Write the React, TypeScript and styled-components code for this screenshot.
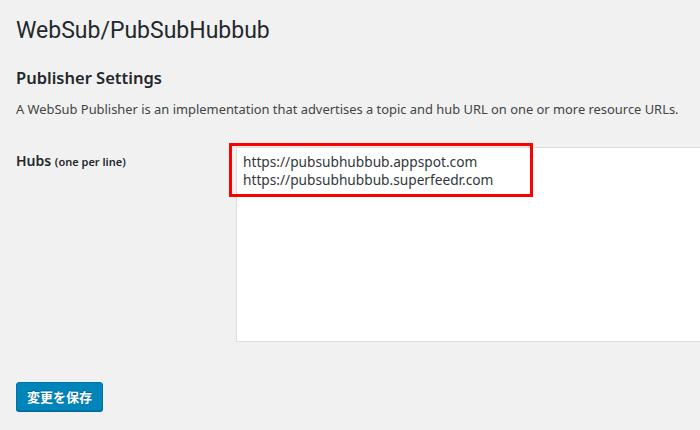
import React from 'react';
import styled, { createGlobalStyle } from 'styled-components';

const GlobalStyle = createGlobalStyle`
  html, body {
    margin: 0;
    padding: 0;
    background: #f1f1f1;
    overflow: hidden;
  }
  body {
    font-family: "Noto Sans", "Noto Sans CJK JP", sans-serif;
    color: #23282d;
  }
`;

const Wrap = styled.div`
  position: relative;
  width: 700px;
  height: 430px;
  padding: 0 0 0 16px;
  box-sizing: border-box;
  overflow: hidden;
`;

const Title = styled.h1`
  margin: 0;
  padding: 16px 0 0;
  font-family: Roboto, sans-serif;
  font-size: 23px;
  font-weight: 400;
  line-height: 29px;
  color: #23282d;
`;

const Section = styled.h2`
  margin: 21px 0 0;
  font-size: 16.5px;
  font-weight: 600;
  line-height: 24px;
`;

const Desc = styled.p`
  margin: 9px 0 0;
  font-size: 12.9px;
  line-height: 20px;
  color: #444;
  white-space: nowrap;
`;

const Row = styled.div`
  display: flex;
  margin-top: 28px;
`;

const Label = styled.div`
  width: 220px;
  flex: none;
  padding-top: 4px;
  font-size: 14px;
  font-weight: 600;
  line-height: 20px;
`;

const Small = styled.small`
  font-size: 11px;
  font-weight: 600;
`;

const Field = styled.div`
  position: relative;
`;

const Area = styled.textarea`
  display: block;
  width: 480px;
  height: 195px;
  box-sizing: border-box;
  margin: 0;
  padding: 5px 6px;
  border: 1px solid #ddd;
  background: #fff;
  font-family: "Noto Sans", sans-serif;
  font-size: 13.7px;
  line-height: 18px;
  color: #32373c;
  resize: none;
  outline: none;
`;

const Highlight = styled.div`
  position: absolute;
  left: -7px;
  top: -4px;
  width: 304px;
  height: 54px;
  box-sizing: border-box;
  border: 3px solid #ff0000;
  pointer-events: none;
`;

const SaveButton = styled.button`
  display: block;
  margin-top: 40px;
  height: 29px;
  padding: 0 10px;
  border: 1px solid #0073aa;
  border-radius: 3px;
  background: #0085ba;
  box-shadow: 0 1px 0 #006799;
  color: #fff;
  font-family: "Noto Sans CJK JP", sans-serif;
  font-size: 13px;
  font-weight: 600;
  text-shadow: 0 -1px 1px #006799;
`;

export default function App() {
  return (
    <>
      <GlobalStyle />
      <Wrap>
        <Title>WebSub/PubSubHubbub</Title>
        <Section>Publisher Settings</Section>
        <Desc>
          A WebSub Publisher is an implementation that advertises a topic and hub URL on one or more resource URLs.
        </Desc>
        <Row>
          <Label>
            Hubs <Small>(one per line)</Small>
          </Label>
          <Field>
            <Area
              readOnly
              defaultValue={'https://pubsubhubbub.appspot.com\nhttps://pubsubhubbub.superfeedr.com'}
            />
            <Highlight />
          </Field>
        </Row>
        <SaveButton>変更を保存</SaveButton>
      </Wrap>
    </>
  );
}
